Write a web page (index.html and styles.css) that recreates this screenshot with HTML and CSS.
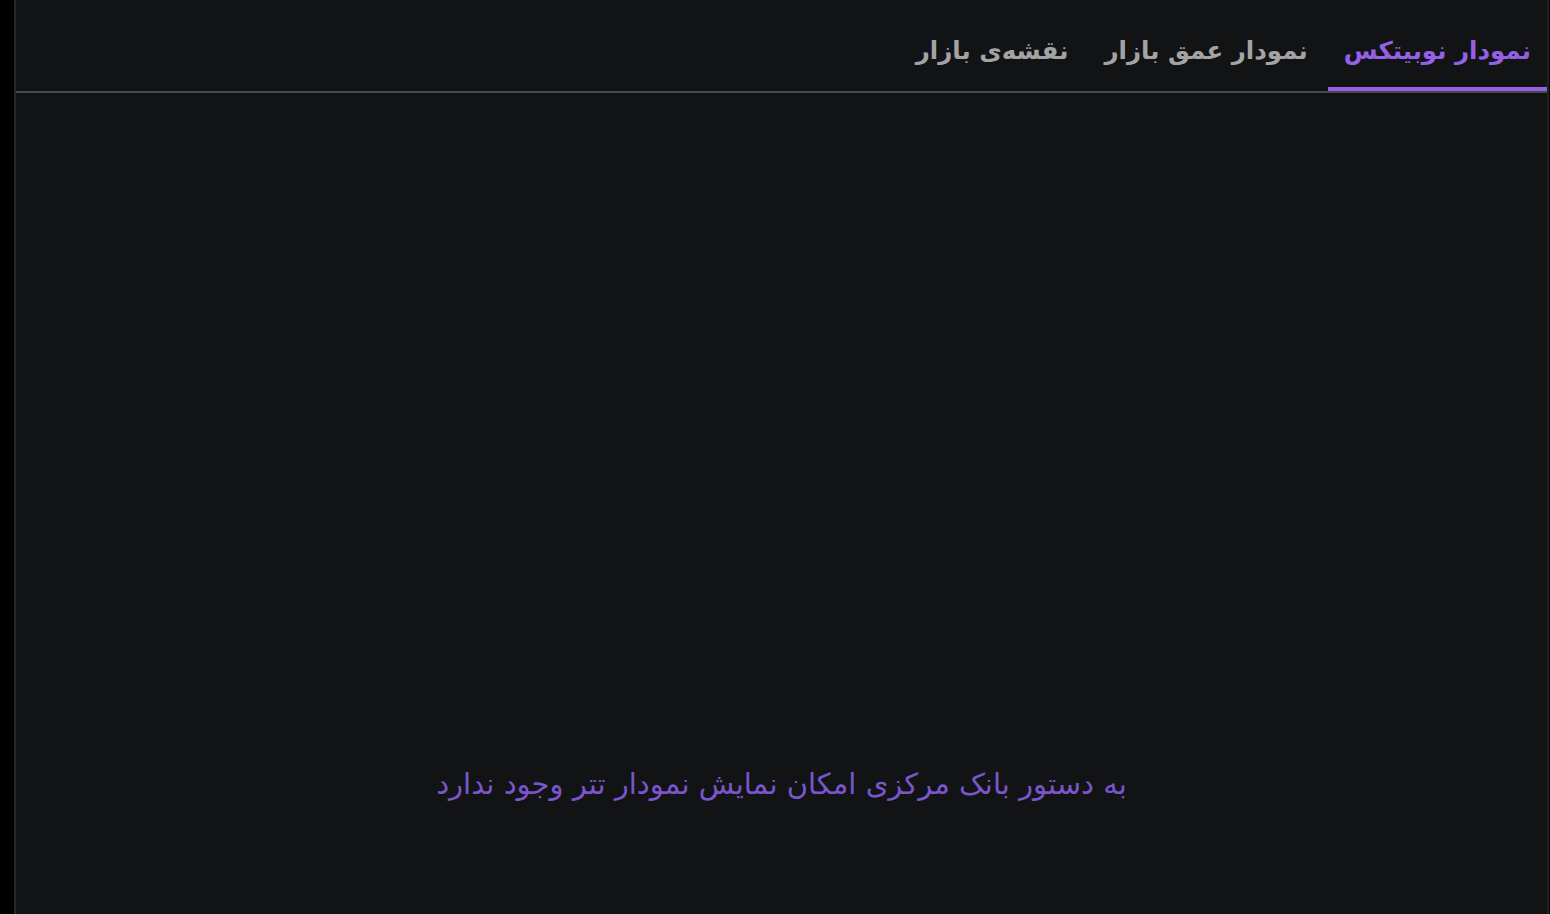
FILE: index.html
```html
<!DOCTYPE html>
<html lang="fa" dir="rtl">
<head>
<meta charset="utf-8">
<title>نمودار</title>
<link rel="stylesheet" href="styles.css">
</head>
<body>
<div class="page">
  <section class="panel">
    <nav class="tabs">
      <div class="tab active">نمودار نوبیتکس</div>
      <div class="tab">نمودار عمق بازار</div>
      <div class="tab">نقشه‌ی بازار</div>
    </nav>
    <div class="chart">
      <p class="notice">به دستور بانک مرکزی امکان نمایش نمودار تتر وجود ندارد</p>
    </div>
  </section>
</div>
</body>
</html>
```

FILE: styles.css
```css
html, body {
  margin: 0;
  padding: 0;
  background: #000;
  height: 100%;
  overflow: hidden;
}
body {
  font-family: "DejaVu Sans", sans-serif;
}
.page {
  display: flex;
  height: 914px;
  padding-left: 14px;
  direction: ltr;
}
.panel {
  flex: 1;
  direction: rtl;
  background: #121315;
  border-left: 2px solid #26262c;
  border-right: 2px solid #1f1f24;
  display: flex;
  flex-direction: column;
  margin-right: 1px;
}
.tabs {
  display: flex;
  align-items: flex-end;
  gap: 4px;
  height: 91px;
  border-bottom: 2px solid #47474e;
}
.tab {
  padding: 0 16px 18px;
  font-size: 24.5px;
  font-weight: bold;
  line-height: 36px;
  color: #a3a3a6;
  border-bottom: 4px solid transparent;
}
.tab.active {
  color: #9461e6;
  border-bottom-color: #9461e6;
}
.chart {
  flex: 1;
  display: flex;
  justify-content: center;
  align-items: flex-start;
  padding-top: 669px;
}
.notice {
  margin: 0;
  font-size: 29px;
  line-height: 44px;
  color: #7a56cc;
}
```
